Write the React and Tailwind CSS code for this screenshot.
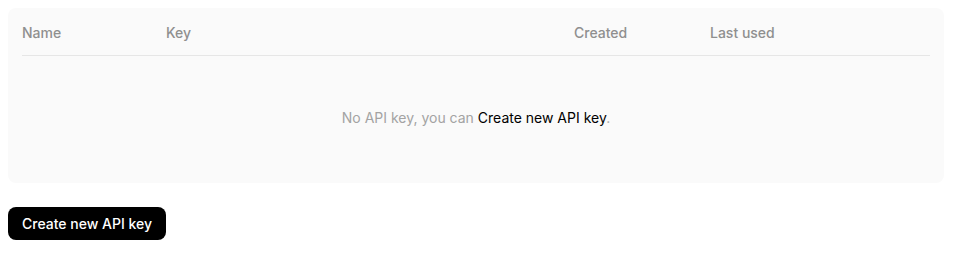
import React from "react";

const columns = [
  { label: "Name", width: "w-[144px]" },
  { label: "Key", width: "w-[408px]" },
  { label: "Created", width: "w-[136px]" },
  { label: "Last used", width: "flex-1" },
];

const App = () => {
  return (
    <div className="pt-2 pl-2 pr-[13px] bg-white font-['Inter','Liberation_Sans',sans-serif] text-sm">
      <div className="bg-[#fafafa] rounded-lg px-3.5 pt-[15px]">
        {/* table header */}
        <div className="flex pb-3 border-b border-[#e6e6e6]">
          {columns.map((col) => (
            <div
              key={col.label}
              className={`${col.width} leading-5 font-medium text-[#8f8f8f]`}
            >
              {col.label}
            </div>
          ))}
        </div>

        {/* empty state */}
        <div className="pt-[52px] pb-[55px] text-center leading-5 text-[#a3a3a3]">
          No API key, you can{" "}
          <span className="text-black cursor-pointer">Create new API key</span>.
        </div>
      </div>

      <button className="mt-6 h-[33px] px-3.5 rounded-lg bg-black text-white font-medium leading-5">
        Create new API key
      </button>
    </div>
  );
};

export default App;
